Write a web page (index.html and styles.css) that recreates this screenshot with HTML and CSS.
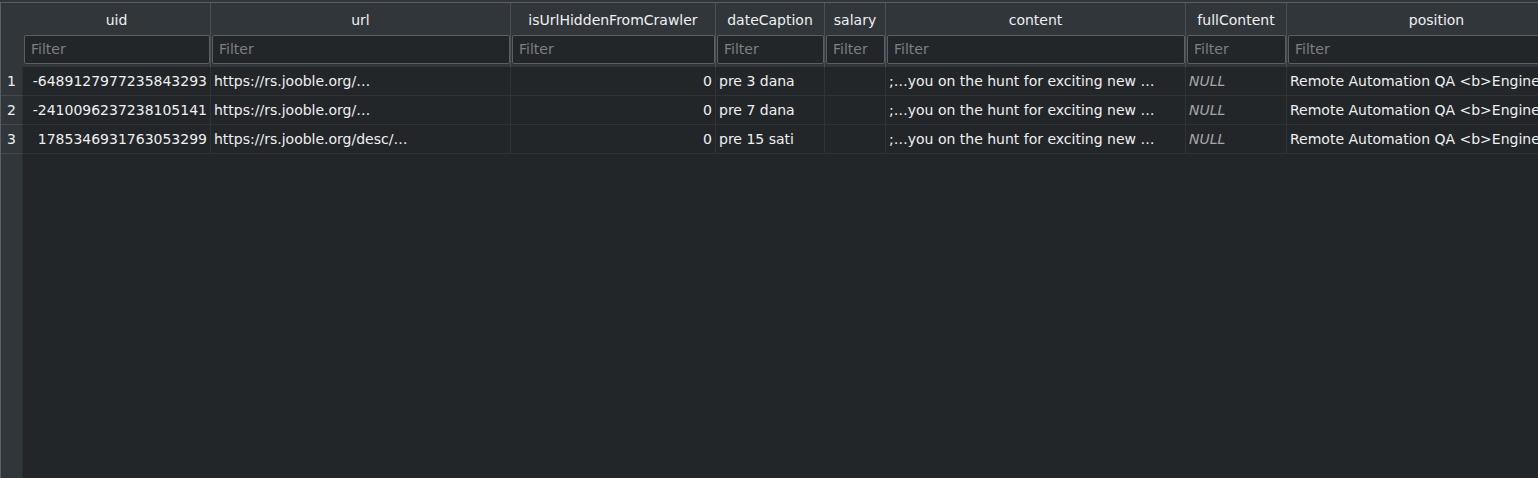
FILE: index.html
```html
<!DOCTYPE html>
<html>
<head>
<meta charset="utf-8">
<link rel="stylesheet" href="styles.css">
</head>
<body>
<div class="frame">
  <div class="grid">
    <div class="hcorner"></div>
    <div class="hcell">uid</div>
    <div class="hcell">url</div>
    <div class="hcell">isUrlHiddenFromCrawler</div>
    <div class="hcell">dateCaption</div>
    <div class="hcell">salary</div>
    <div class="hcell">content</div>
    <div class="hcell">fullContent</div>
    <div class="hcell">position</div>

    <div class="fcorner"></div>
    <div class="fcell"><div class="filter">Filter</div></div>
    <div class="fcell"><div class="filter">Filter</div></div>
    <div class="fcell"><div class="filter">Filter</div></div>
    <div class="fcell"><div class="filter">Filter</div></div>
    <div class="fcell"><div class="filter">Filter</div></div>
    <div class="fcell"><div class="filter">Filter</div></div>
    <div class="fcell"><div class="filter">Filter</div></div>
    <div class="fcell"><div class="filter">Filter</div></div>

    <div class="rh">1</div>
    <div class="cell num">-6489127977235843293</div>
    <div class="cell">https://rs.jooble.org/…</div>
    <div class="cell num">0</div>
    <div class="cell">pre 3 dana</div>
    <div class="cell"></div>
    <div class="cell">;…you on the hunt for exciting new …</div>
    <div class="cell null">NULL</div>
    <div class="cell">Remote Automation QA &lt;b&gt;Engineer&lt;/b&gt;</div>

    <div class="rh">2</div>
    <div class="cell num">-2410096237238105141</div>
    <div class="cell">https://rs.jooble.org/…</div>
    <div class="cell num">0</div>
    <div class="cell">pre 7 dana</div>
    <div class="cell"></div>
    <div class="cell">;…you on the hunt for exciting new …</div>
    <div class="cell null">NULL</div>
    <div class="cell">Remote Automation QA &lt;b&gt;Engineer&lt;/b&gt;</div>

    <div class="rh">3</div>
    <div class="cell num">1785346931763053299</div>
    <div class="cell">https://rs.jooble.org/desc/…</div>
    <div class="cell num">0</div>
    <div class="cell">pre 15 sati</div>
    <div class="cell"></div>
    <div class="cell">;…you on the hunt for exciting new …</div>
    <div class="cell null">NULL</div>
    <div class="cell">Remote Automation QA &lt;b&gt;Engineer&lt;/b&gt;</div>

    <div class="rhfill"></div>
    <div class="datafill"></div>
  </div>
</div>
</body>
</html>
```

FILE: styles.css
```css
html, body {
  margin: 0;
  padding: 0;
  height: 100%;
  overflow: hidden;
  background: #31363b;
}
body {
  padding-top: 2px;
  box-sizing: border-box;
  font-family: "DejaVu Sans", sans-serif;
  font-size: 14px;
  color: #eff0f1;
}
.frame {
  height: 100%;
  box-sizing: border-box;
  border-top: 1px solid #5b5f63;
  border-left: 1px solid #5b5f63;
  overflow: hidden;
}
.grid {
  display: grid;
  grid-template-columns: 22px 188px 300px 205px 109px 61px 300px 101px 300px;
  grid-template-rows: 32px 32px 29px 29px 29px 1fr;
  height: 100%;
  width: max-content;
}
.hcorner, .fcorner {
  background: #31363b;
}
.hcell {
  background: #31363b;
  border-right: 1px solid #4c5054;
  display: flex;
  align-items: center;
  justify-content: center;
  white-space: nowrap;
  overflow: hidden;
  padding-top: 1px;
}
.fcell {
  background: #31363b;
  border-right: 1px solid #4c5054;
  padding: 0 0 3px 1px;
}
.filter {
  height: 100%;
  box-sizing: border-box;
  background: #232629;
  border: 1px solid #5b5f63;
  border-radius: 2px;
  color: #7c7f83;
  padding: 0 0 1px 6px;
  display: flex;
  align-items: center;
  overflow: hidden;
  white-space: nowrap;
}
.rh {
  background: #31363b;
  border-right: 1px solid #2b2f33;
  border-bottom: 1px solid #45494d;
  display: flex;
  align-items: center;
  justify-content: center;
}
.cell {
  background: #232629;
  border-right: 1px solid #2f3336;
  border-bottom: 1px solid #2f3336;
  padding: 0 3px;
  display: flex;
  align-items: center;
  white-space: nowrap;
  overflow: hidden;
}
.num {
  justify-content: flex-end;
}
.null {
  font-style: italic;
  color: #a3a7ab;
}
.rhfill {
  background: #31363b;
  border-right: 1px solid #2b2f33;
}
.datafill {
  grid-column: 2 / -1;
  background: #232629;
}
```
